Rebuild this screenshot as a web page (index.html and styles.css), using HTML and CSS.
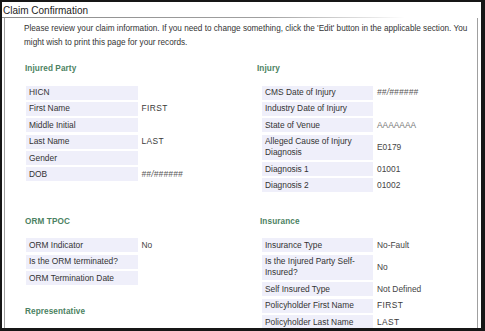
FILE: index.html
```html
<!DOCTYPE html>
<html>
<head>
<meta charset="utf-8">
<link rel="stylesheet" href="styles.css">
</head>
<body>
<div class="frame">
  <div class="title">Claim Confirmation</div>
  <div class="content">
    <p class="intro">Please review your claim information. If you need to change something, click the 'Edit' button in the applicable section. You<br>might wish to print this page for your records.</p>
    <div class="grid">
      <div class="col left">
        <div class="heading">Injured Party</div>
        <div class="table t-left">
          <div class="label">HICN</div><div class="value"></div>
          <div class="label">First Name</div><div class="value caps">FIRST</div>
          <div class="label">Middle Initial</div><div class="value"></div>
          <div class="label">Last Name</div><div class="value caps">LAST</div>
          <div class="label">Gender</div><div class="value"></div>
          <div class="label">DOB</div><div class="value mask">##/######</div>
        </div>
      </div>
      <div class="col right">
        <div class="heading">Injury</div>
        <div class="table t-right">
          <div class="label">CMS Date of Injury</div><div class="value mask">##/######</div>
          <div class="label">Industry Date of Injury</div><div class="value"></div>
          <div class="label">State of Venue</div><div class="value light">AAAAAAA</div>
          <div class="label">Alleged Cause of Injury Diagnosis</div><div class="value">E0179</div>
          <div class="label">Diagnosis 1</div><div class="value">01001</div>
          <div class="label">Diagnosis 2</div><div class="value">01002</div>
        </div>
      </div>
      <div class="col left">
        <div class="heading">ORM TPOC</div>
        <div class="table t-left">
          <div class="label">ORM Indicator</div><div class="value">No</div>
          <div class="label">Is the ORM terminated?</div><div class="value"></div>
          <div class="label">ORM Termination Date</div><div class="value"></div>
        </div>
        <div class="heading rep">Representative</div>
      </div>
      <div class="col right">
        <div class="heading ins">Insurance</div>
        <div class="table t-right">
          <div class="label">Insurance Type</div><div class="value">No-Fault</div>
          <div class="label">Is the Injured Party Self-Insured?</div><div class="value">No</div>
          <div class="label">Self Insured Type</div><div class="value">Not Defined</div>
          <div class="label">Policyholder First Name</div><div class="value caps">FIRST</div>
          <div class="label">Policyholder Last Name</div><div class="value caps">LAST</div>
        </div>
      </div>
    </div>
  </div>
</div>
</body>
</html>
```
FILE: styles.css
```css
html, body {
  margin: 0;
  padding: 0;
  background: #ffffff;
}
body {
  width: 485px;
  height: 331px;
  overflow: hidden;
  font-family: "Liberation Sans", Arial, sans-serif;
  color: #333;
}
.frame {
  box-sizing: border-box;
  width: 485px;
  height: 331px;
  border: 2px solid #161616;
  border-right-width: 4px;
  border-bottom-width: 3px;
  background: #fff;
  overflow: hidden;
  display: flex;
  flex-direction: column;
}
.title {
  font-size: 10px;
  line-height: 12px;
  padding: 3px 0 0 1px;
  color: #222;
  border-bottom: 1px solid #999;
  border-image: linear-gradient(to right, #8c8c8c 0%, #a0a0a0 55%, #e8e8e8 78%, #ffffff 84%) 1;
}
.content {
  flex: 1;
  margin: 0 3px 0 2px;
  border-left: 1px solid #a0a0a0;
  border-right: 1px solid #a0a0a0;
  padding: 4px 0 0 19px;
}
.intro {
  margin: 0;
  font-size: 8.2px;
  line-height: 14px;
  white-space: nowrap;
  color: #333;
}
.grid {
  display: grid;
  grid-template-columns: 233px 1fr;
  row-gap: 23.5px;
  margin-top: 13px;
}
.heading {
  font-size: 8.2px;
  line-height: 12px;
  font-weight: bold;
  color: #4c8262;
  letter-spacing: 0.1px;
}
.left .heading { padding-left: 1px; }
.right .heading { padding-left: 0; }
.right .heading.ins { padding-left: 3px; }
.table {
  display: grid;
  row-gap: 2.4px;
  margin-top: 10.5px;
  font-size: 8.4px;
  line-height: 11px;
}
.t-left {
  grid-template-columns: 112px 1fr;
  margin-left: 2px;
}
.t-right {
  grid-template-columns: 111px 1fr;
  margin-left: 5px;
}
.label {
  background: #efeffa;
  padding: 1.5px 3px;
  color: #333;
}
.value {
  display: flex;
  align-items: center;
  padding-left: 4px;
  color: #444;
}
.t-left .value { padding-left: 3.5px; }
.caps { letter-spacing: 0.4px; color: #3a3a3a; }
.mask { font-style: italic; color: #555; letter-spacing: 0.2px; }
.light { color: #777; }
.heading.rep {
  margin-top: 21px;
}
```
